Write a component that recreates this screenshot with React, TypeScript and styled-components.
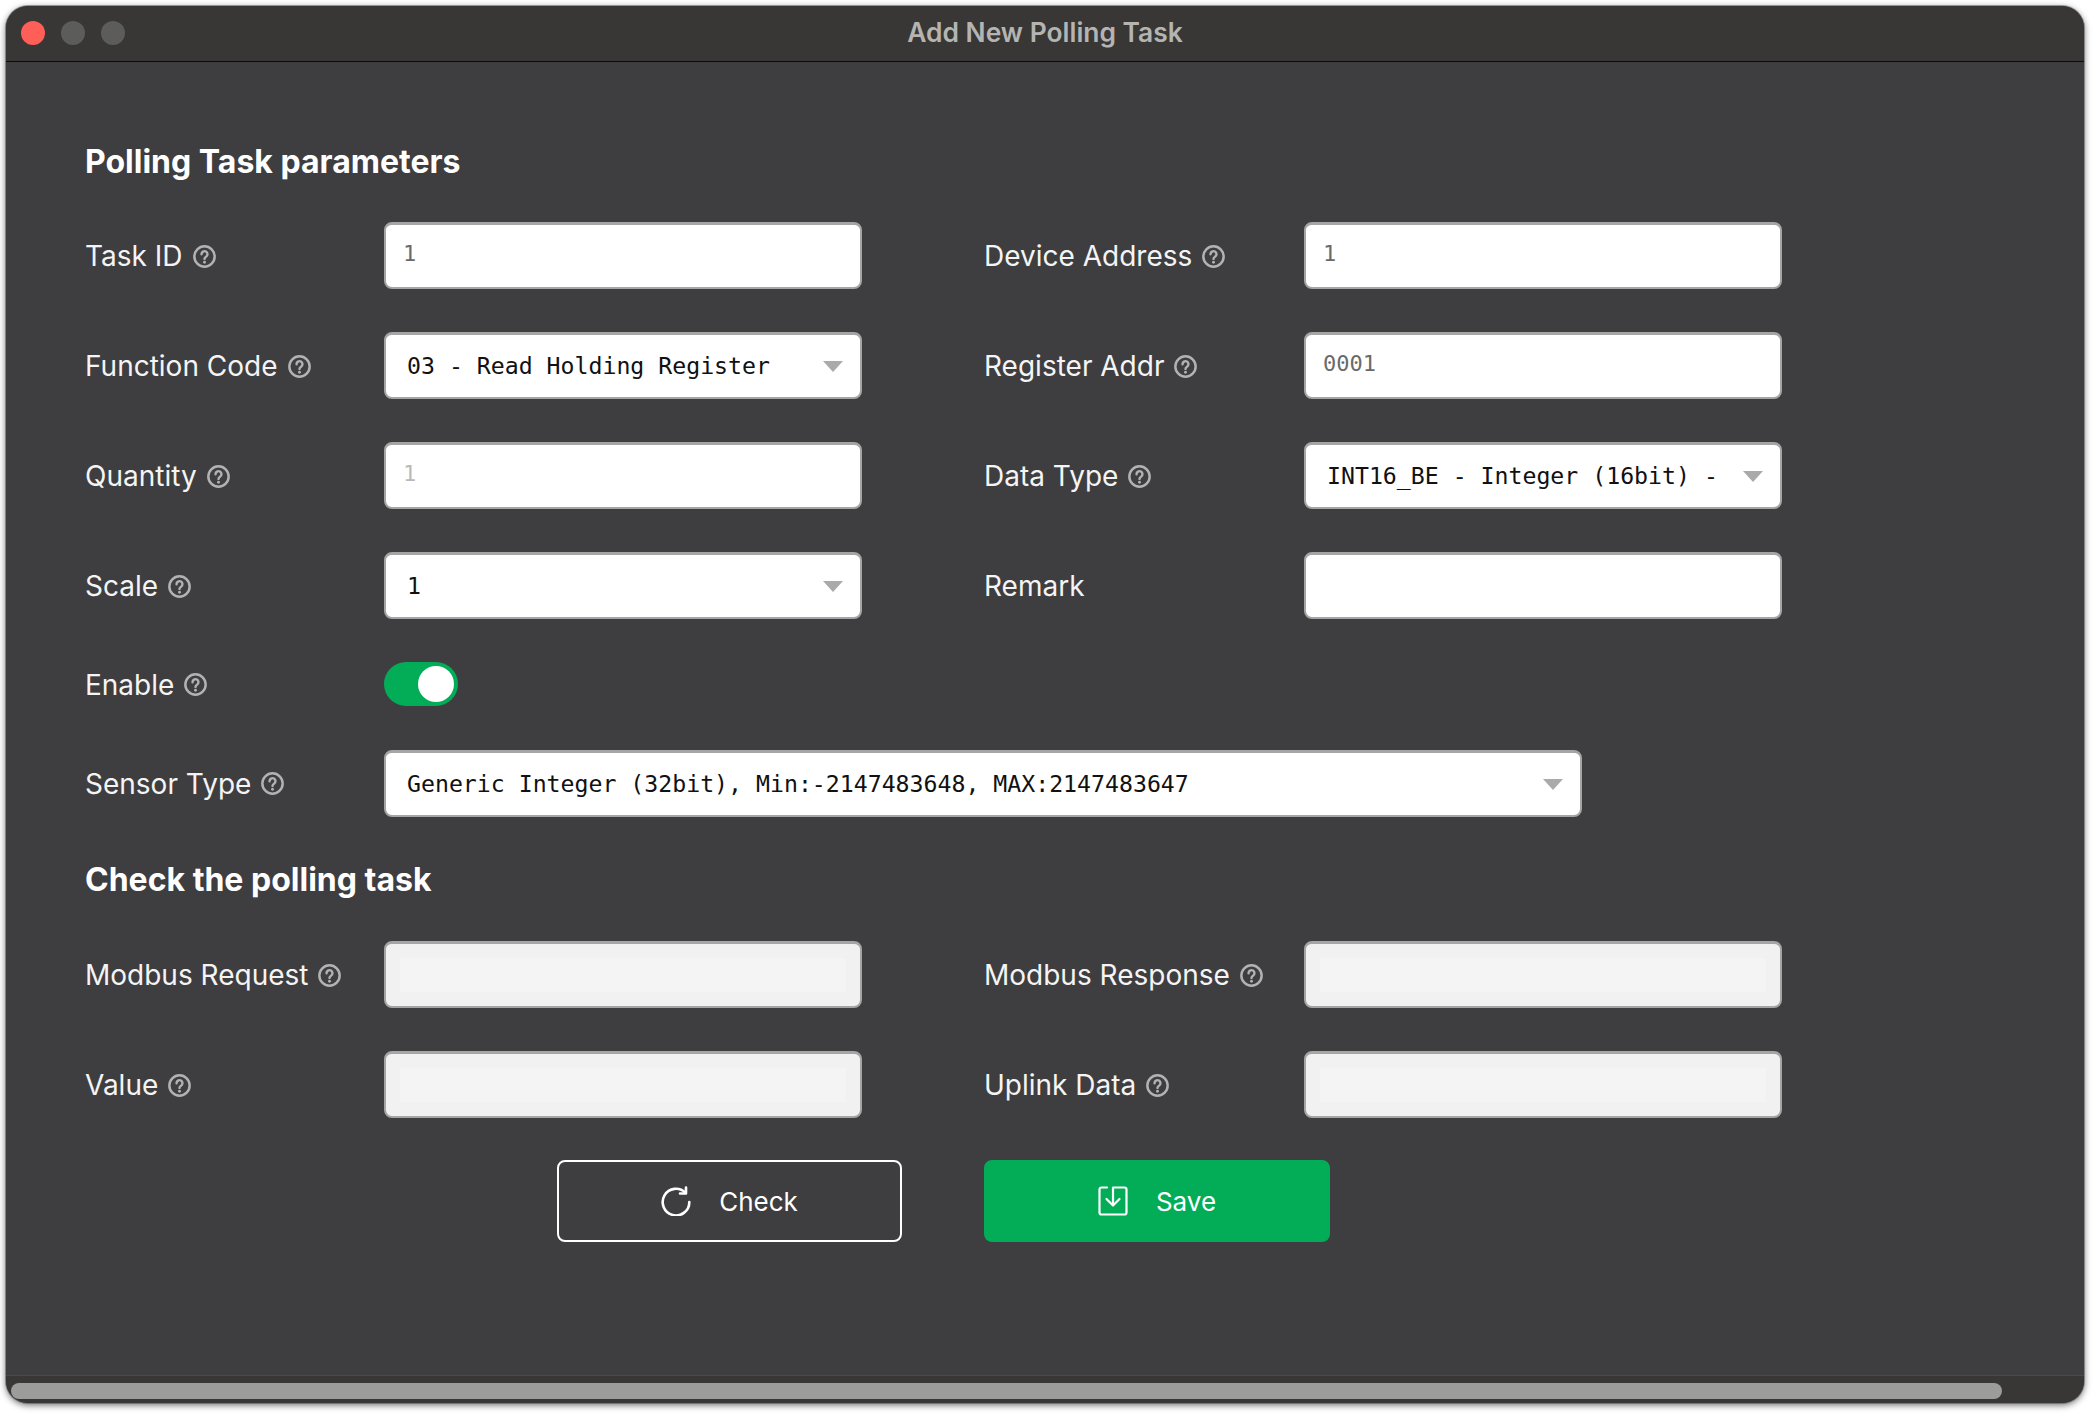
import styled, { createGlobalStyle } from "styled-components";

const GlobalStyle = createGlobalStyle`
  html, body {
    margin: 0;
    padding: 0;
    background: #ffffff;
  }
  * {
    box-sizing: border-box;
  }
`;

const HelpIcon = () => (
  <HelpSvg viewBox="0 0 24 24" fill="none" stroke="currentColor" strokeWidth="2.6">
    <circle cx="12" cy="12" r="10.6" />
    <path d="M8.9 9.6a3.100 3.100 0 1 1 4.700 2.600c-1 .6-1.600 1.200-1.600 2.300" strokeLinecap="round" strokeWidth="2.500" />
    <circle cx="12" cy="18" r="1.500" fill="currentColor" stroke="none" />
  </HelpSvg>
);

const Field = ({ label, help = true, children }: any) => (
  <>
    <Label>
      {label}
      {help && <HelpIcon />}
    </Label>
    {children}
  </>
);

const SelectBox = ({ value, wide }: any) => (
  <SelectWrap $wide={wide}>
    <Select defaultValue={value}>
      <option>{value}</option>
    </Select>
    <Caret />
  </SelectWrap>
);

const App = () => {
  return (
    <Page>
      <GlobalStyle />
      <Win>
        <TitleBar>
          <Lights>
            <Light $color="#ff5f57" />
            <Light $color="#5c5c5a" />
            <Light $color="#5c5c5a" />
          </Lights>
          <Title>Add New Polling Task</Title>
        </TitleBar>
        <Content>
          <Heading>Polling Task parameters</Heading>
          <FormGrid>
            <Field label="Task ID">
              <TextInput defaultValue="1" />
            </Field>
            <Field label="Device Address">
              <TextInput defaultValue="1" />
            </Field>
            <Field label="Function Code">
              <SelectBox value="03 - Read Holding Register" />
            </Field>
            <Field label="Register Addr">
              <TextInput defaultValue="0001" />
            </Field>
            <Field label="Quantity">
              <TextInput placeholder="1" />
            </Field>
            <Field label="Data Type">
              <SelectBox value="INT16_BE - Integer (16bit) - Big Endian" />
            </Field>
            <Field label="Scale">
              <SelectBox value="1" />
            </Field>
            <Field label="Remark" help={false}>
              <TextInput />
            </Field>
            <WideLabel>
              Enable
              <HelpIcon />
            </WideLabel>
            <WideControl>
              <Toggle>
                <Knob />
              </Toggle>
            </WideControl>
            <WideLabel>
              Sensor Type
              <HelpIcon />
            </WideLabel>
            <WideControl $nudge>
              <SelectBox wide value="Generic Integer (32bit), Min:-2147483648, MAX:2147483647" />
            </WideControl>
          </FormGrid>
          <SecondHeading>Check the polling task</SecondHeading>
          <FormGrid>
            <Field label="Modbus Request">
              <TextInput disabled />
            </Field>
            <Field label="Modbus Response">
              <TextInput disabled />
            </Field>
            <Field label="Value">
              <TextInput disabled />
            </Field>
            <Field label="Uplink Data">
              <TextInput disabled />
            </Field>
          </FormGrid>
          <Actions>
            <ActionButton>
              <svg width="30" height="30" viewBox="0 0 30 30" fill="none" stroke="currentColor" strokeWidth="2.6" strokeLinecap="round" strokeLinejoin="round">
                <path d="M24.500 6.800A13.300 13.300 0 1 0 28.300 16" />
                <path d="M25 1.500V7.500H19" />
              </svg>
              Check
            </ActionButton>
            <ActionButton $primary>
              <svg width="30" height="30" viewBox="0 0 30 30" fill="none" stroke="currentColor" strokeWidth="2.2" strokeLinecap="round" strokeLinejoin="round">
                <path d="M9 1.500H3.500A2 2 0 0 0 1.500 3.500V26.500A2 2 0 0 0 3.500 28.500H26.500A2 2 0 0 0 28.500 26.500V3.500A2 2 0 0 0 26.500 1.500H15V19" />
                <path d="M8.500 13L15 19.500L21.500 13" />
              </svg>
              Save
            </ActionButton>
          </Actions>
        </Content>
        <ScrollTrack>
          <ScrollThumb />
        </ScrollTrack>
      </Win>
    </Page>
  );
};

const Page = styled.div`
  width: 2094px;
  height: 1414px;
  padding: 6px 10px 11px 6px;
  overflow: hidden;
`;

const Win = styled.div`
  height: 100%;
  display: flex;
  flex-direction: column;
  background: #3e3d3f;
  border-radius: 22px;
  overflow: hidden;
  box-shadow: 0 0 0 1px rgba(90, 90, 90, 0.55), 0 2px 7px rgba(0, 0, 0, 0.6);
  font-family: Inter, "Liberation Sans", sans-serif;
`;

const TitleBar = styled.div`
  position: relative;
  flex: none;
  height: 56px;
  padding-bottom: 4px;
  display: flex;
  align-items: center;
  justify-content: center;
  background: #383735;
  border-bottom: 1px solid #0c0c0c;
`;

const Lights = styled.div`
  position: absolute;
  left: 15px;
  top: 15px;
  display: flex;
  gap: 16px;
`;

const Light = styled.span<{ $color: string }>`
  width: 24px;
  height: 24px;
  border-radius: 50%;
  background: ${(p) => p.$color};
`;

const Title = styled.div`
  font-size: 26.4px;
  font-weight: 600;
  color: #b4b4b2;
`;

const Content = styled.div`
  flex: 1;
  padding: 70px 0 0 79px;
`;

const Heading = styled.h2`
  margin: 0 0 30px;
  height: 60px;
  line-height: 60px;
  font-size: 32px;
  font-weight: 700;
  color: #ffffff;
`;

const SecondHeading = styled(Heading)`
  margin: 33px 0 31px;
`;

const FormGrid = styled.div`
  display: grid;
  grid-template-columns: 299px 478px 442px 478px;
  row-gap: 43px;
  align-items: center;
`;

const Label = styled.label`
  display: flex;
  align-items: center;
  gap: 10px;
  padding-top: 1px;
  font-size: 28px;
  font-weight: 400;
  color: #f4f4f4;
  white-space: nowrap;

  &:nth-child(4n + 3) {
    margin-left: 122px;
  }
`;

const WideLabel = styled(Label)`
  grid-column: 1;

  &:nth-child(4n + 3) {
    margin-left: 0;
  }
`;

const WideControl = styled.div<{ $nudge?: boolean }>`
  grid-column: 2 / -1;
  margin-top: ${(p) => (p.$nudge ? "1px" : "0")};
`;

const HelpSvg = styled.svg`
  width: 23px;
  height: 23px;
  color: #b2b2b2;
`;

const TextInput = styled.input`
  display: block;
  width: 478px;
  height: 67px;
  padding: 0 17px 5px;
  border: 2px solid #a5a5a5;
  border-top-width: 3px;
  border-radius: 8px;
  outline: none;
  background: #ffffff;
  font-family: "DejaVu Sans Mono", monospace;
  font-size: 22px;
  color: #6a6a6a;

  &::placeholder {
    color: #b9b9b9;
  }

  &:disabled {
    background: #f4f4f4;
    box-shadow: inset 0 0 0 14px #f1f1f1;
  }
`;

const SelectWrap = styled.div<{ $wide?: boolean }>`
  position: relative;
  width: ${(p) => (p.$wide ? "1198px" : "478px")};
  height: 67px;
`;

const Select = styled.select`
  appearance: none;
  display: block;
  width: 100%;
  height: 100%;
  padding: 1px 54px 0 21px;
  border: 2px solid #a5a5a5;
  border-top-width: 3px;
  border-radius: 8px;
  outline: none;
  background: #ffffff;
  font-family: "DejaVu Sans Mono", monospace;
  font-size: 23.2px;
  line-height: 1.5;
  color: #111111;
`;

const Caret = styled.span`
  position: absolute;
  top: 29px;
  right: 19px;
  width: 0;
  height: 0;
  border-left: 10px solid transparent;
  border-right: 10px solid transparent;
  border-top: 11px solid #aaaaaa;
  pointer-events: none;
`;

const Toggle = styled.div`
  width: 74px;
  height: 44px;
  padding: 4px;
  display: flex;
  justify-content: flex-end;
  border-radius: 22px;
  background: #03ad58;
`;

const Knob = styled.span`
  width: 36px;
  height: 36px;
  border-radius: 50%;
  background: #ffffff;
`;

const Actions = styled.div`
  display: flex;
  gap: 82px;
  margin: 42px 0 0 472px;
`;

const ActionButton = styled.button<{ $primary?: boolean }>`
  width: ${(p) => (p.$primary ? "346px" : "345px")};
  height: 82px;
  display: flex;
  align-items: center;
  justify-content: center;
  gap: 28px;
  border: 2px solid ${(p) => (p.$primary ? "#03ad58" : "#ffffff")};
  border-radius: 8px;
  background: ${(p) => (p.$primary ? "#03ad58" : "transparent")};
  font-family: Inter, "Liberation Sans", sans-serif;
  font-size: 26px;
  color: #ffffff;
`;

const ScrollTrack = styled.div`
  flex: none;
  height: 28px;
  padding: 7px 82px 4px 5px;
  background: #383735;
  border-top: 1px solid #4a494c;
`;

const ScrollThumb = styled.div`
  height: 16px;
  border-radius: 8px;
  background: #9c9c9a;
`;

export default App;
